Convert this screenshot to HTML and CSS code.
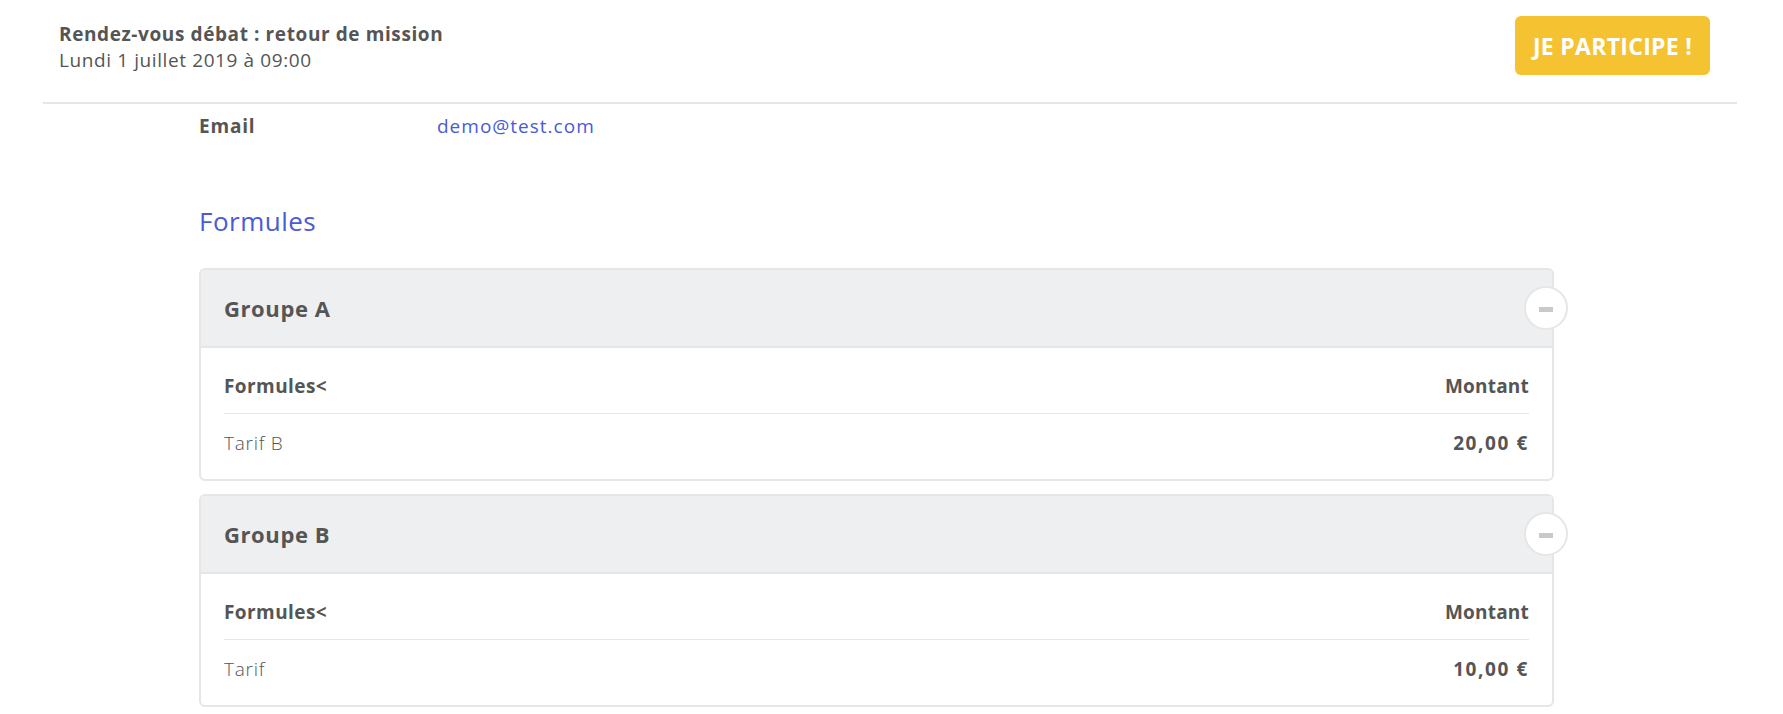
FILE: index.html
```html
<!DOCTYPE html>
<html lang="fr">
<head>
<meta charset="utf-8">
<title>Rendez-vous débat : retour de mission</title>
<link rel="stylesheet" href="styles.css">
</head>
<body>
<header class="topbar">
  <div class="event">
    <div class="event-title">Rendez-vous débat : retour de mission</div>
    <div class="event-date">Lundi 1 juillet 2019 à 09:00</div>
  </div>
  <a class="btn-participate" href="#">JE PARTICIPE !</a>
</header>

<main class="content">
  <dl class="info-row">
    <dt class="info-label">Email</dt>
    <dd class="info-value"><a href="#">demo@test.com</a></dd>
  </dl>

  <h2 class="section-title">Formules</h2>

  <section class="group">
    <div class="group-head">
      <h3 class="group-name">Groupe A</h3>
      <button class="toggle" type="button" aria-label="Réduire"><span class="minus"></span></button>
    </div>
    <div class="group-body">
      <table class="prices">
        <thead>
          <tr><th class="col-name">Formules&lt;</th><th class="col-amount">Montant</th></tr>
        </thead>
        <tbody>
          <tr><td class="col-name">Tarif B</td><td class="col-amount">20,00 €</td></tr>
        </tbody>
      </table>
    </div>
  </section>

  <section class="group">
    <div class="group-head">
      <h3 class="group-name">Groupe B</h3>
      <button class="toggle" type="button" aria-label="Réduire"><span class="minus"></span></button>
    </div>
    <div class="group-body">
      <table class="prices">
        <thead>
          <tr><th class="col-name">Formules&lt;</th><th class="col-amount">Montant</th></tr>
        </thead>
        <tbody>
          <tr><td class="col-name">Tarif</td><td class="col-amount">10,00 €</td></tr>
        </tbody>
      </table>
    </div>
  </section>
</main>
</body>
</html>
```

FILE: styles.css
```css
* { box-sizing: border-box; }

html, body {
  margin: 0;
  padding: 0;
  background: #ffffff;
}

body {
  font-family: "Open Sans", "Liberation Sans", sans-serif;
  color: #555555;
  font-size: 19px;
  line-height: 26px;
  letter-spacing: 0.6px;
}

a { text-decoration: none; }

/* Top bar */
.topbar {
  display: flex;
  justify-content: space-between;
  align-items: flex-start;
  height: 104px;
  margin: 0 46px 0 43px;
  padding: 16px 27px 0 16px;
  border-bottom: 2px solid #e6e6e6;
}

.event { margin-top: 5px; }

.event-title {
  font-weight: 700;
  color: #555555;
}

.event-date {
  font-weight: 400;
  color: #555555;
}

.btn-participate {
  display: flex;
  align-items: center;
  justify-content: center;
  width: 195px;
  height: 59px;
  border-radius: 6px;
  background: #f5c231;
  color: #ffffff;
  font-weight: 700;
  font-size: 23px;
  letter-spacing: 0.3px;
}

/* Content */
.content {
  width: 1355px;
  margin-left: 199px;
  padding-bottom: 20px;
}

.info-row {
  display: flex;
  margin: 9px 0 0;
}

.info-label {
  width: 238px;
  font-weight: 700;
  letter-spacing: 0.8px;
  margin: 0;
}

.info-value {
  margin: 0;
}

.info-value a {
  color: #4a5bd6;
  letter-spacing: 1px;
}

.section-title {
  margin: 64px 0 29px;
  font-size: 26px;
  line-height: 36px;
  font-weight: 400;
  letter-spacing: 0.5px;
  color: #4a5bd6;
}

/* Groups */
.group {
  border: 2px solid #e6e6e6;
  border-radius: 6px;
  margin-bottom: 13px;
  background: #ffffff;
}

.group-head {
  position: relative;
  display: flex;
  align-items: center;
  height: 78px;
  padding: 0 23px;
  background: #eeeff1;
  border-bottom: 2px solid #e6e6e6;
  border-radius: 4px 4px 0 0;
}

.group-name {
  margin: 0;
  font-size: 22px;
  line-height: 30px;
  font-weight: 700;
  letter-spacing: 0.6px;
  color: #555555;
}

.toggle {
  position: absolute;
  right: -16px;
  top: 50%;
  transform: translateY(-50%);
  width: 44px;
  height: 44px;
  padding: 0;
  border: 2px solid #e6e6e6;
  border-radius: 50%;
  background: #ffffff;
  display: flex;
  align-items: center;
  justify-content: center;
  cursor: pointer;
}

.minus {
  display: block;
  width: 14px;
  height: 5px;
  margin-top: 2px;
  background: #c9c9c9;
}

.group-body {
  padding: 0 23px;
}

.prices {
  width: 100%;
  border-collapse: collapse;
}

.prices th {
  padding: 25px 0 14px;
  font-weight: 700;
  border-bottom: 1px solid #e6e6e6;
}

.prices th.col-name { letter-spacing: 0.42px; }
.prices th.col-amount { letter-spacing: 0.2px; }

.prices td {
  padding: 16px 0 23px;
  font-weight: 400;
}

.col-name { text-align: left; }
.col-amount { text-align: right; }

.prices td.col-name {
  font-weight: 300;
  letter-spacing: 0.75px;
}

.prices td.col-amount {
  font-weight: 700;
  letter-spacing: 1.6px;
}
```
